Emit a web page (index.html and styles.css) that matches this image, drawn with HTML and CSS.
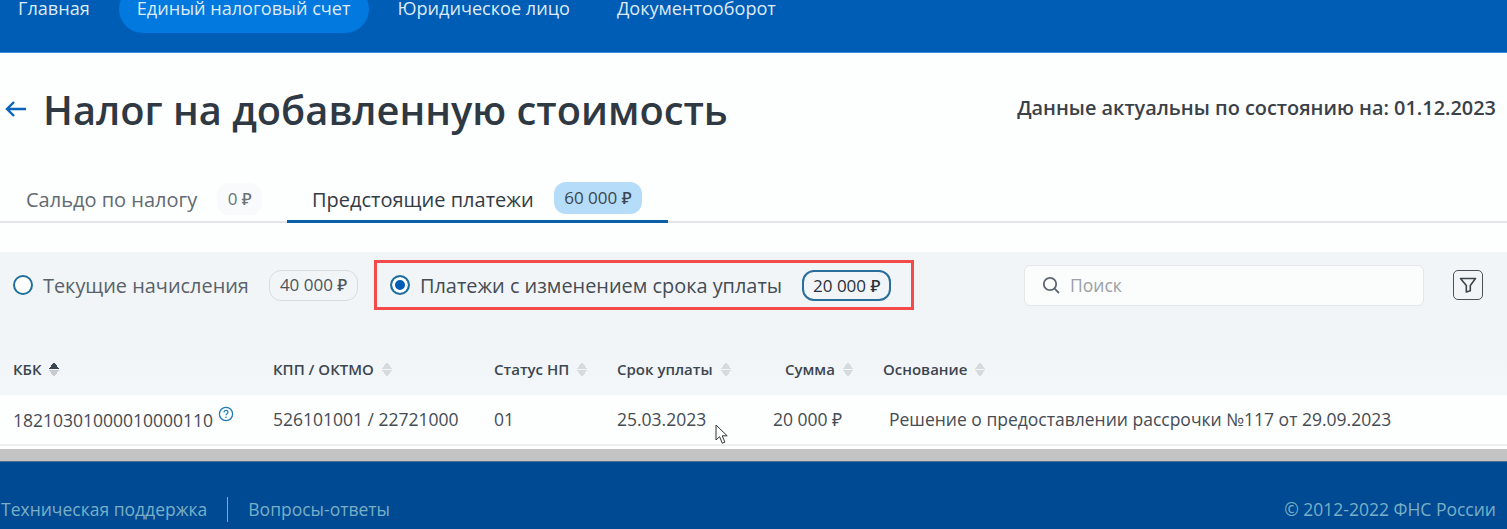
FILE: index.html
```html
<!DOCTYPE html>
<html lang="ru">
<head>
    <meta charset="UTF-8">
    <title>Налог на добавленную стоимость</title>
    <link rel="stylesheet" href="styles.css">
</head>
<body>
    <header class="topbar">
        <nav class="nav">
            <a class="nav-item">Главная</a>
            <a class="nav-item active">Единый налоговый счет</a>
            <a class="nav-item">Юридическое лицо</a>
            <a class="nav-item">Документооборот</a>
        </nav>
    </header>

    <main class="content">
        <div class="title-row">
            <svg class="back" width="24" height="20" viewBox="0 0 24 20">
                <path d="M22 10H3M10 3l-7 7 7 7" fill="none" stroke="#0a63b8" stroke-width="2.4"/>
            </svg>
            <h1 class="title">Налог на добавленную стоимость</h1>
            <div class="updated">Данные актуальны по состоянию на: 01.12.2023</div>
        </div>

        <div class="tabs">
            <div class="tab tab-first">
                <span class="tab-label muted">Сальдо по налогу</span>
                <span class="tab-badge plain">0 ₽</span>
            </div>
            <div class="tab tab-active">
                <span class="tab-label">Предстоящие платежи</span>
                <span class="tab-badge blue">60 000 ₽</span>
            </div>
        </div>

        <section class="panel">
            <div class="filters">
                <div class="option option-first">
                    <span class="radio"></span>
                    <span class="option-label">Текущие начисления</span>
                    <span class="pill">40 000 ₽</span>
                </div>
                <div class="option option-marked">
                    <span class="radio checked"></span>
                    <span class="option-label">Платежи с изменением срока уплаты</span>
                    <span class="pill pill-active">20 000 ₽</span>
                </div>
                <div class="search">
                    <svg width="20" height="20" viewBox="0 0 20 20">
                        <circle cx="9" cy="9" r="6.2" fill="none" stroke="#5d6670" stroke-width="1.8"/>
                        <path d="M13.6 13.6L18 18" stroke="#5d6670" stroke-width="1.8"/>
                    </svg>
                    <span class="search-text">Поиск</span>
                </div>
                <button class="filter-btn">
                    <svg width="20" height="20" viewBox="0 0 20 20">
                        <path d="M2.5 3.500h15l-5.200 7v5.200l-4 1.200v-6.400z" fill="none" stroke="#3c444c" stroke-width="1.600" stroke-linejoin="round"/>
                    </svg>
                </button>
            </div>

            <div class="table-head">
                <div class="th">КБК <span class="sort sort-up"></span></div>
                <div class="th">КПП / ОКТМО <span class="sort"></span></div>
                <div class="th">Статус НП <span class="sort"></span></div>
                <div class="th">Срок уплаты <span class="sort"></span></div>
                <div class="th th-sum">Сумма <span class="sort"></span></div>
                <div class="th">Основание <span class="sort"></span></div>
            </div>
        </section>

        <div class="table-row">
            <div class="td">18210301000010000110<svg class="help" width="16" height="16" viewBox="0 0 16 16">
                <circle cx="8" cy="8" r="6.600" fill="none" stroke="#1b7bb8" stroke-width="1.300"/>
                <path d="M6 6.400c0-1.300 1-2 2-2s2 .7 2 1.900c0 1.500-2 1.500-2 3" fill="none" stroke="#1b7bb8" stroke-width="1.200"/>
                <circle cx="8" cy="11.300" r=".8" fill="#1b7bb8"/>
            </svg></div>
            <div class="td">526101001 / 22721000</div>
            <div class="td">01</div>
            <div class="td">25.03.2023</div>
            <div class="td">20 000 ₽</div>
            <div class="td td-reason">Решение о предоставлении рассрочки №117 от 29.09.2023</div>
        </div>

        <svg class="mouse" width="14" height="21" viewBox="0 0 14 21">
            <path d="M1 1v15l3.600-3.300 2.700 6.500 2.600-1.100-2.700-6.300h5z" fill="#fff" stroke="#333" stroke-width="1"/>
        </svg>
    </main>

    <div class="scrollbar"></div>

    <footer class="footer">
        <a class="foot-link foot-first">Техническая поддержка</a>
        <a class="foot-link">Вопросы-ответы</a>
        <span class="copyright">© 2012-2022 ФНС России</span>
    </footer>
</body>
</html>
```

FILE: styles.css
```css
* {
    margin: 0;
    padding: 0;
    box-sizing: border-box;
}
html, body {
    height: 100%;
}
body {
    font-family: "Open Sans", "Noto Sans", sans-serif;
    background-color: #fdfefe;
    color: #3e4650;
    overflow: hidden;
}

/* top bar */
.topbar {
    height: 53px;
    background-color: #005db6;
    border-bottom: 1px solid #3b8ddb;
    overflow: hidden;
}
.nav {
    display: flex;
    margin-top: -15px;
}
.nav-item {
    height: 48px;
    line-height: 46px;
    font-size: 18.100px;
    color: #dfeaf6;
    padding: 0 18px;
    margin-right: 11px;
    border-radius: 24px;
}
.nav-item.active {
    background-color: #0279de;
}

/* title */
.content {
    position: relative;
    height: 396px;
}
.title-row {
    display: flex;
    align-items: center;
    height: 112px;
    padding: 0 11px 0 4px;
}
.back {
    margin-right: 15px;
}
.title {
    font-size: 39.800px;
    font-weight: 600;
    color: #2f3943;
    flex: 1;
}
.updated {
    font-size: 19.900px;
    font-weight: 600;
    color: #3a4148;
    margin-bottom: 3px;
}

/* tabs */
.tabs {
    display: flex;
    height: 58px;
    border-bottom: 2px solid #e3e6e8;
    padding-top: 15px;
}
.tab {
    display: flex;
    align-items: center;
    height: 43px;
}
.tab-first {
    padding-left: 26px;
    width: 287px;
}
.tab-active {
    width: 381px;
    padding-left: 25px;
    border-bottom: 3px solid #0a5fa8;
}
.tab-label {
    font-size: 20px;
    color: #333b44;
    margin-bottom: 2px;
}
.tab-first .tab-label {
    margin-bottom: 5px;
}
.tab-badge {
    font-size: 17px;
    font-weight: 500;
    height: 32px;
    line-height: 31px;
    border-radius: 12px;
    padding: 0 10.500px;
    margin-left: 20px;
    margin-bottom: 4px;
    color: #3b454f;
}
.tab-first .tab-badge {
    margin-bottom: 6px;
}
.tab-label.muted {
    color: #626a72;
}
.tab-badge.plain {
    background-color: #f8fafb;
    color: #6b7278;
}
.tab-badge.blue {
    background-color: #b5dcf8;
}

/* panel with radios and table head */
.panel {
    margin-top: 29px;
    height: 143px;
    background: linear-gradient(#f1f5f8 70%, #f4f7f9);
}
.filters {
    display: flex;
    align-items: center;
    height: 66px;
}
.option {
    display: flex;
    align-items: center;
}
.option-first {
    padding-left: 13px;
    width: 374px;
}
.option-marked {
    width: 540px;
    height: 50px;
    padding-left: 13px;
    border: 3px solid #f44a4a;
}
.radio {
    width: 20px;
    height: 20px;
    border-radius: 50%;
    border: 2px solid #1f6f9e;
    background-color: #fff;
    flex-shrink: 0;
    margin-right: 10px;
}
.radio.checked {
    background-color: #005db6;
    box-shadow: inset 0 0 0 3px #fff;
}
.option-label {
    font-size: 19.900px;
    color: #5a6269;
}
.option-marked .option-label {
    color: #444c54;
}
.pill {
    font-size: 17px;
    font-weight: 500;
    height: 31px;
    line-height: 28px;
    border: 1px solid #d8dcde;
    border-radius: 12px;
    padding: 0 10px;
    margin-left: 20px;
    color: #4d555c;
}
.pill-active {
    border: 2px solid #2a6f9c;
    color: #2a3139;
    line-height: 27px;
    padding: 0 9px;
}
.search {
    display: flex;
    align-items: center;
    width: 400px;
    height: 41px;
    margin-left: 110px;
    padding-left: 16px;
    background-color: #fbfdfd;
    border: 1px solid #e3e7e9;
    border-radius: 6px;
}
.search-text {
    font-size: 17.500px;
    color: #9aa0a5;
    margin-left: 9px;
}
.filter-btn {
    display: flex;
    align-items: center;
    justify-content: center;
    width: 30px;
    height: 30px;
    margin-left: 29px;
    background: none;
    border: 1px solid #4a5158;
    border-radius: 5px;
}

/* table */
.table-head, .table-row {
    display: grid;
    grid-template-columns: 260px 221px 123px 156px 110px 1fr;
    padding-left: 13px;
    align-items: center;
}
.table-head {
    height: 77px;
    padding-bottom: 16px;
    align-items: end;
}
.th {
    font-size: 15px;
    font-weight: 600;
    color: #3c4650;
    display: flex;
    align-items: center;
    gap: 8px;
}
.th-sum {
    padding-left: 12px;
}
.sort {
    display: inline-block;
    width: 10px;
    height: 15px;
    background:
        linear-gradient(to top left, #d5dadd 50%, transparent 51%) left top / 5px 7px no-repeat,
        linear-gradient(to top right, #d5dadd 50%, transparent 51%) right top / 5px 7px no-repeat,
        linear-gradient(to bottom left, #d5dadd 50%, transparent 51%) left bottom / 5px 7px no-repeat,
        linear-gradient(to bottom right, #d5dadd 50%, transparent 51%) right bottom / 5px 7px no-repeat;
}
.sort-up {
    margin-left: -1px;
    background:
        linear-gradient(to top left, #3c4650 50%, transparent 51%) left top / 5px 7px no-repeat,
        linear-gradient(to top right, #3c4650 50%, transparent 51%) right top / 5px 7px no-repeat,
        linear-gradient(to bottom left, #c5cbcf 50%, transparent 51%) left bottom / 5px 7px no-repeat,
        linear-gradient(to bottom right, #c5cbcf 50%, transparent 51%) right bottom / 5px 7px no-repeat;
}
.table-row {
    height: 51px;
    padding-bottom: 1px;
    border-bottom: 2px solid #eceef0;
}
.td {
    font-size: 17.500px;
    color: #454c54;
}
.td-reason {
    padding-left: 6px;
}
.help {
    margin-left: 5px;
    vertical-align: 5px;
}
.mouse {
    position: absolute;
    left: 715px;
    top: 371px;
}

.scrollbar {
    height: 12px;
    background-color: #c4c4c4;
}

/* footer */
.footer {
    display: flex;
    align-items: center;
    height: 68px;
    padding: 27px 11px 0 1px;
    background-color: #004a93;
    border-top: 1px solid #4f6f8f;
}
.foot-link {
    font-size: 17.500px;
    color: #79afc6;
    line-height: 25px;
}
.foot-first {
    padding-right: 20px;
    margin-right: 20px;
    border-right: 1px solid #79afc6;
}
.copyright {
    margin-left: auto;
    font-size: 17.500px;
    color: #79afc6;
}
```
